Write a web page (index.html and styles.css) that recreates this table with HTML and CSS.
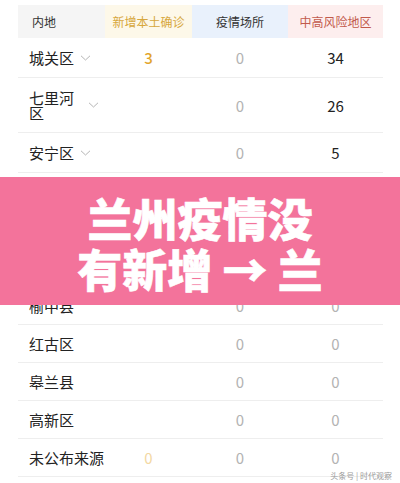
FILE: index.html
```html
<!DOCTYPE html>
<html lang="zh-CN">
<head>
    <meta charset="UTF-8">
    <meta name="viewport" content="width=device-width, initial-scale=1.0">
    <title>兰州疫情</title>
    <link rel="stylesheet" href="styles.css">
</head>
<body>
    <div class="board">
        <div class="row head">
            <div class="cell name">内地</div>
            <div class="cell new">新增本土确诊</div>
            <div class="cell place">疫情场所</div>
            <div class="cell risk">中高风险地区</div>
        </div>

        <div class="row item open">
            <div class="cell name"><span class="txt">城关区</span><svg class="chev" viewBox="0 0 11 6"><polyline points="1,0.8 5.5,5 10,0.8"/></svg></div>
            <div class="cell num hot">3</div>
            <div class="cell num zero">0</div>
            <div class="cell num dark">34</div>
        </div>
        <div class="row item open">
            <div class="cell name"><span class="txt">七里河区</span><svg class="chev" viewBox="0 0 11 6"><polyline points="1,0.8 5.5,5 10,0.8"/></svg></div>
            <div class="cell num"></div>
            <div class="cell num zero">0</div>
            <div class="cell num dark">26</div>
        </div>
        <div class="row item open">
            <div class="cell name"><span class="txt">安宁区</span><svg class="chev" viewBox="0 0 11 6"><polyline points="1,0.8 5.5,5 10,0.8"/></svg></div>
            <div class="cell num"></div>
            <div class="cell num zero">0</div>
            <div class="cell num dark">5</div>
        </div>
        <div class="row item">
            <div class="cell name"><span class="txt">西固区</span></div>
            <div class="cell num"></div>
            <div class="cell num zero">0</div>
            <div class="cell num zero">0</div>
        </div>
        <div class="row item">
            <div class="cell name"><span class="txt">兰州新区</span></div>
            <div class="cell num"></div>
            <div class="cell num zero">0</div>
            <div class="cell num zero">0</div>
        </div>
        <div class="row item">
            <div class="cell name"><span class="txt">永登县</span></div>
            <div class="cell num"></div>
            <div class="cell num zero">0</div>
            <div class="cell num zero">0</div>
        </div>
        <div class="row item">
            <div class="cell name"><span class="txt">榆中县</span></div>
            <div class="cell num"></div>
            <div class="cell num zero">0</div>
            <div class="cell num zero">0</div>
        </div>
        <div class="row item">
            <div class="cell name"><span class="txt">红古区</span></div>
            <div class="cell num"></div>
            <div class="cell num zero">0</div>
            <div class="cell num zero">0</div>
        </div>
        <div class="row item">
            <div class="cell name"><span class="txt">皋兰县</span></div>
            <div class="cell num"></div>
            <div class="cell num zero">0</div>
            <div class="cell num zero">0</div>
        </div>
        <div class="row item">
            <div class="cell name"><span class="txt">高新区</span></div>
            <div class="cell num"></div>
            <div class="cell num zero">0</div>
            <div class="cell num zero">0</div>
        </div>
        <div class="row item">
            <div class="cell name"><span class="txt">未公布来源</span></div>
            <div class="cell num pale">0</div>
            <div class="cell num zero">0</div>
            <div class="cell num zero">0</div>
        </div>
    </div>

    <!-- title card laid over the table -->
    <div class="banner">
        <div class="banner-title">兰州疫情没<br>有新增 → 兰</div>
    </div>

    <div class="mark">头条号 | 时代观察</div>
</body>
</html>
```

FILE: styles.css
```css
body {
    margin: 0;
    background-color: #fff;
    font-family: "Noto Sans CJK SC", "Noto Sans", sans-serif;
    color: #222;
    position: relative;
    width: 400px;
    height: 483px;
    overflow: hidden;
}
.board {
    width: 365px;
    margin: 5px 0 0 18px;
}
.row {
    display: grid;
    grid-template-columns: 87px 87px 96px 95px;
    align-items: center;
}
.row.head {
    height: 33px;
    align-items: stretch;
    font-size: 12px;
}
.row.head .cell {
    display: flex;
    align-items: center;
    justify-content: center;
}
.row.head .name {
    justify-content: flex-start;
    padding-left: 14px;
    background-color: #f5f5f5;
    color: #333;
}
.row.head .new {
    background-color: #fdf8e9;
    color: #d7a73c;
}
.row.head .place {
    background-color: #e9f1fc;
    color: #333;
}
.row.head .risk {
    background-color: #fdeeee;
    color: #c25a4c;
}
.row.item {
    padding: 11px 0;
    border-bottom: 1px solid #eee;
    line-height: 15px;
}
.row.item.open {
    padding: 12px 0;
}
.item .name {
    display: flex;
    align-items: center;
    gap: 6px;
    padding: 0 6px 0 11px;
    font-size: 15px;
    color: #222;
    white-space: nowrap;
}
.item.open .name {
    white-space: normal;
}
.item .txt {
    min-width: 0;
}
.chev {
    flex: none;
    width: 11px;
    height: 6px;
    fill: none;
    stroke: #b5b5b5;
    stroke-width: 1;
}
.num {
    text-align: center;
    font-size: 15px;
}
.num.hot {
    color: #e2a42b;
    font-weight: 500;
}
.num.zero {
    color: #b3b3b3;
}
.num.dark {
    color: #222;
}
.num.pale {
    color: #f3d8a3;
}
.banner {
    position: absolute;
    left: 0;
    top: 177px;
    width: 400px;
    height: 128px;
    box-sizing: border-box;
    padding-top: 15px;
    background-color: #f3739b;
    display: flex;
    justify-content: center;
}
.banner-title {
    color: #fff;
    font-size: 45px;
    line-height: 51px;
    font-weight: 900;
    text-align: center;
    -webkit-text-stroke: 0.6px #fff;
}
.mark {
    position: absolute;
    right: 8px;
    bottom: 3px;
    font-size: 8px;
    line-height: 9px;
    color: #9a9a9a;
}
```
